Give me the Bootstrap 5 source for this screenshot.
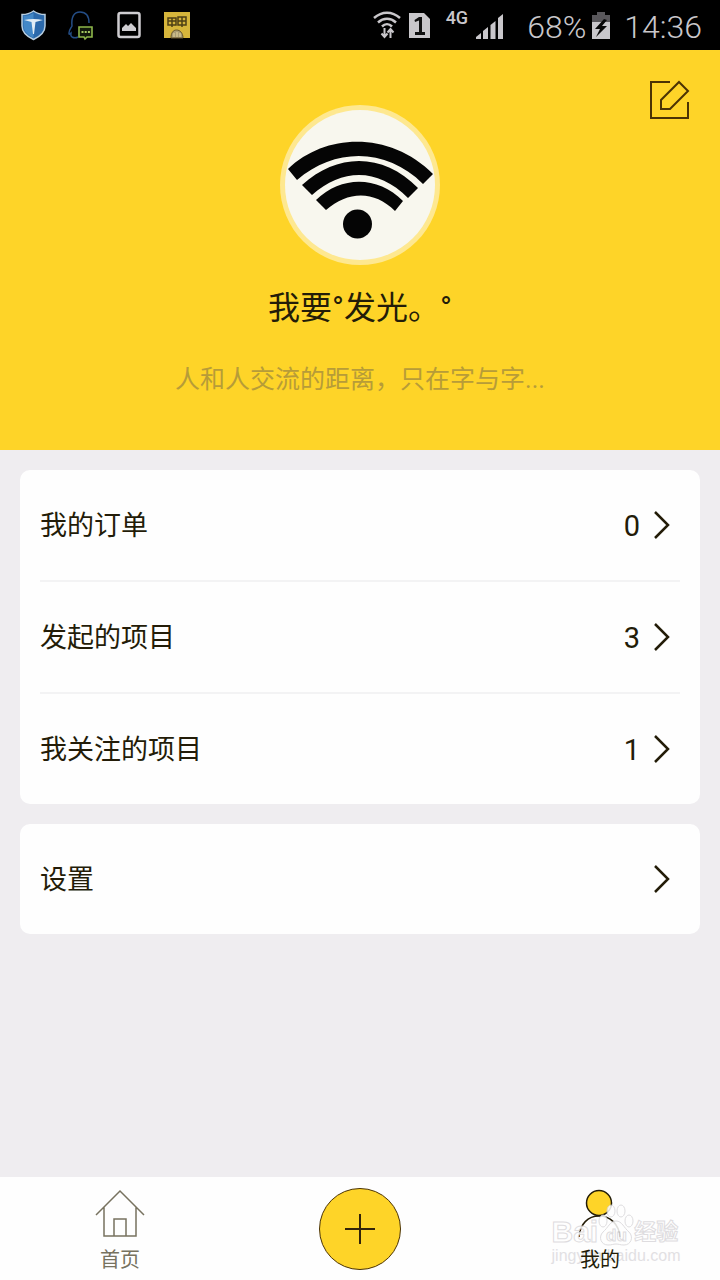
<!DOCTYPE html>
<html lang="zh-CN">
<head>
<meta charset="utf-8">
<meta name="viewport" content="width=device-width, initial-scale=1">
<title>我的</title>
<link href="https://cdn.jsdelivr.net/npm/bootstrap@5.3.0/dist/css/bootstrap.min.css" rel="stylesheet">
<style>
  body { background: #efedf0; color: #231c08; font-family: Roboto, "Noto Sans CJK SC", sans-serif; }
  svg { display: block; flex: none; }
  .status-bar { background: #000; color: #c9c7cb; height: 50px; padding: 0 18px 0 20px; font-size: 32px; font-weight: 300; line-height: 50px; }
  .status-bar .status-text { padding-top: 3px; }
  .status-apps { gap: 20px; }
  .net-label { font-size: 18px; font-weight: 500; line-height: 20px; padding-top: 8px; }
  .battery { margin: 0 14px 0 6px; }
  .hero { background: #fed428; height: 400px; padding: 24px 24px 0; }
  .hero-top { display: grid; grid-template-columns: 1fr auto 1fr; }
  .avatar { width: 160px; margin-top: 31px; grid-column: 2; }
  .edit-btn { color: #4b3304; }
  .nickname { font-size: 32px; line-height: 48px; margin-top: 19px; }
  .motto { font-size: 25px; line-height: 36px; margin-top: 30px; color: #b79c38; }
  .panels { padding: 20px; gap: 20px; }
  .panel { --bs-list-group-bg: #fefefe; border-radius: 10px; background: #fefefe; padding: 0 20px; }
  .panel-row { height: 110px; padding: 2px 10px 0 0; color: #231c08; font-size: 27px; line-height: 40px; background: transparent; border: 0; }
  .panel-row + .panel-row { height: 112px; border-top: 2px solid #f3f3f4; }
  .panel-row svg { margin-bottom: 2px; }
  .row-count { font-size: 29px; margin-right: 14px; }
  .tabs { background: #fefefe; height: 103px; }
  .tab-link { font-size: 20px; line-height: 30px; color: #77725f; padding-top: 7px; gap: 6px; }
  .tab-link.active { color: #231c08; }
  .tab-label { position: relative; z-index: 2; }
  .add-btn { width: 82px; height: 82px; background: #fed428; border: 1px solid #4b3304; color: #33240a; }
  .watermark { inset: 34px 0 auto; padding-left: 32px; color: #fff; -webkit-text-stroke: 1px #d9d7da; pointer-events: none; font-weight: 700; opacity: .85; z-index: 1; }
  .wm-logo { height: 32px; font-size: 30px; line-height: 32px; font-family: "Liberation Sans", "Noto Sans CJK SC", sans-serif; }
  .wm-logo svg { margin-bottom: 14px; }
  .wm-cn { font-size: 22px; }
  .wm-url { font-size: 16px; line-height: 16px; font-weight: 400; color: #dddbde; -webkit-text-stroke: 0; font-family: "Liberation Sans", sans-serif; }
</style>
</head>
<body class="d-flex flex-column min-vh-100">

<header class="status-bar d-flex justify-content-between">
  <div class="status-apps d-flex align-items-center">
    <svg width="27" height="32" viewBox="0 0 27 32"><path d="M13.500 2C10 4.500 6 5.500 2 5.500V17c0 6 5 10.500 11.500 13.500C20 27.500 25 23 25 17V5.500C21 5.500 17 4.500 13.500 2Z" fill="#2b69ab" stroke="#b8cee0" stroke-width="1.500"/><path d="M13.500 4v25C8 26 3.500 22 3.500 17V7c4 0 7-1 10-3Z" fill="#4388c7"/><path d="M4 11c6-1.500 13-1.500 19 0l-7.500 2L14 25h-1l-1.500-12Z" fill="#e2edf5"/></svg>
    <svg width="28" height="32" viewBox="0 0 28 32" fill="none"><path d="M5 28c-2-1-1-3-1-4-1 1-2 2-2 0 0-3 2-5 3-7C4 8 7 3 13 3s9 4 9 11" stroke="#244d86" stroke-width="1.500"/><path d="M5 28c2 1 4 1 6 0" stroke="#244d86" stroke-width="1.500"/><path d="M12 18h13v10h-5l-2 2-1-2h-5Z" fill="#11180b" stroke="#8fb84b" stroke-width="1.600"/><path d="M14.500 22h2v2h-2zm3.200 0h2v2h-2zm3.200 0h2v2h-2z" fill="#a5cb62"/></svg>
    <svg width="28" height="32" viewBox="0 0 28 32"><rect x="3.500" y="4" width="21" height="24" rx="2" fill="none" stroke="#cfcdd1" stroke-width="2.500"/><path d="M7 22v-3l4-4 2 2 3-3 5 5v3Z" fill="#cfcdd1"/></svg>
    <svg width="28" height="32" viewBox="0 0 28 32"><rect x="1" y="3" width="26" height="26" fill="#d6b53b"/><path d="M5 9h8v7H5zM9 9v9M5 12h8M15 8h8v8h-8zM19 8v10M15 12h8" fill="none" stroke="#4d3f16" stroke-width="1.500"/><path d="M8 29c0-5 2-8 5.500-8s6.500 3 6.500 8Z" fill="#a99c74" stroke="#66552a"/><path d="M11 28v-4m3 4v-5m3 5v-4" stroke="#e6d69a"/></svg>
  </div>
  <div class="d-flex align-items-center">
    <svg width="28" height="32" viewBox="0 0 28 32" fill="none" stroke="#c9c7cb" stroke-width="2.500"><path d="M1 9c8-7 18-7 26 0M5 13.500c5.500-5 12.500-5 18 0M9 17.500c3-3 7-3 10 0"/><path d="M11.500 19v9m-3-3.500 3 3.500 3-3.500M17.500 29v-9m-3 3.500 3-3.500 3 3.500" stroke-width="2"/></svg>
    <svg class="ms-2" width="21" height="32" viewBox="0 0 21 32"><path d="M0 4h15l6 6v19H0Z" fill="#c9c7cb"/><path d="M5.500 11 10 8h3v15h3v3H6v-3h4V11.500L6 13Z" fill="#111"/></svg>
    <span class="net-label align-self-start ms-3">4G</span>
    <svg class="ms-2" width="27" height="32" viewBox="0 0 27 32" fill="#c9c7cb"><path d="M0 30v-2l5-4v6zM7 30v-8l5-4v12zM14.500 30V16l5-4v18zM22 30V9l5-4v25z"/></svg>
    <span class="status-text ms-4">68%</span>
    <svg class="battery" width="18" height="32" viewBox="0 0 18 32"><path d="M0 6h5V3h8v3h5v8H0Z" fill="#59575b"/><path d="M0 13h18v17H0Z" fill="#c9c7cb"/><path d="m12 10-9 10h5l-4 8L15 17h-5l5-6Z" fill="#080808"/></svg>
    <span class="status-text">14:36</span>
  </div>
</header>

<section class="hero text-center">
  <div class="hero-top">
    <svg class="avatar" height="160" viewBox="0 0 160 160" role="img" aria-label="头像">
      <circle cx="80" cy="80" r="80" fill="#fee890"/><circle cx="80" cy="80" r="75" fill="#f8f7ee"/>
      <g fill="#050505"><path d="M8 64C47 27 111 27 153 69L143 79C107 43 56 42 17 75Z"/><path d="M22 80C58 47 104 48 138 83L128 93C98 63 63 63 32 90Z"/><path d="M36 95C62 70 98 71 123 96L115 106C94 85 68 86 46 105Z"/><circle cx="77.500" cy="119" r="14.500"/></g>
    </svg>
    <button type="button" class="btn edit-btn p-1 border-0 align-self-start ms-auto" aria-label="编辑资料">
      <svg width="44" height="44" viewBox="0 0 44 44" fill="none" stroke="currentColor" stroke-width="2"><path d="M22 4H3v36h37V24"/><path d="m31 4 9 9-18 18h-9v-9Z"/></svg>
    </button>
  </div>
  <h1 class="nickname fw-normal mb-0">我要°发光。°</h1>
  <p class="motto mb-0 text-truncate">人和人交流的距离，只在字与字...</p>
</section>

<main class="panels d-flex flex-column flex-grow-1">
  <div class="panel list-group">
    <a href="#orders" class="panel-row list-group-item list-group-item-action d-flex align-items-center">
      <span>我的订单</span><span class="row-count ms-auto">0</span>
      <svg width="16" height="28" viewBox="0 0 16 28" fill="none" stroke="currentColor" stroke-width="2.500"><path d="m1 1 13 13L1 27"/></svg>
    </a>
    <a href="#projects" class="panel-row list-group-item list-group-item-action d-flex align-items-center">
      <span>发起的项目</span><span class="row-count ms-auto">3</span>
      <svg width="16" height="28" viewBox="0 0 16 28" fill="none" stroke="currentColor" stroke-width="2.500"><path d="m1 1 13 13L1 27"/></svg>
    </a>
    <a href="#following" class="panel-row list-group-item list-group-item-action d-flex align-items-center">
      <span>我关注的项目</span><span class="row-count ms-auto">1</span>
      <svg width="16" height="28" viewBox="0 0 16 28" fill="none" stroke="currentColor" stroke-width="2.500"><path d="m1 1 13 13L1 27"/></svg>
    </a>
  </div>
  <div class="panel list-group">
    <a href="#settings" class="panel-row list-group-item list-group-item-action d-flex align-items-center">
      <span>设置</span>
      <svg class="ms-auto" width="16" height="28" viewBox="0 0 16 28" fill="none" stroke="currentColor" stroke-width="2.500"><path d="m1 1 13 13L1 27"/></svg>
    </a>
  </div>
</main>

<nav class="tabs row g-0 align-items-center text-center" aria-label="主导航">
  <div class="col-4">
    <a href="#home" class="tab-link text-decoration-none d-flex flex-column align-items-center">
      <svg width="50" height="50" viewBox="0 0 50 50" fill="none" stroke="currentColor" stroke-width="1.500"><path d="M1 26 25 2l24 24M9 18v29h32V18M19 47V30h12v17"/></svg>
      <span class="tab-label">首页</span>
    </a>
  </div>
  <div class="col-4">
    <button type="button" class="btn add-btn rounded-circle p-0 d-inline-flex align-items-center justify-content-center" aria-label="新建">
      <svg width="32" height="32" viewBox="0 0 32 32" stroke="currentColor" stroke-width="2"><path d="M16 1v30M1 16h30"/></svg>
    </button>
  </div>
  <div class="col-4 position-relative">
    <a href="#me" class="tab-link active text-decoration-none d-flex flex-column align-items-center" aria-current="page">
      <svg width="50" height="50" viewBox="0 0 50 50" fill="none" stroke="currentColor" stroke-width="1.500"><circle cx="24" cy="14" r="12.500" fill="#fed428"/><path d="M4 48C5 35 13 27 24 27s20 8 21 21"/></svg>
      <span class="tab-label">我的</span>
    </a>
    <div class="watermark position-absolute d-flex justify-content-center text-start" aria-hidden="true">
      <div>
        <div class="wm-logo d-flex align-items-center"><span>Bai</span>
          <svg width="36" height="44" viewBox="0 0 36 44" fill="#fff" stroke="#d9d7da"><ellipse cx="5" cy="18" rx="4" ry="6"/><ellipse cx="13" cy="8" rx="4" ry="6"/><ellipse cx="23" cy="8" rx="4" ry="6"/><ellipse cx="31" cy="18" rx="4" ry="6"/><path d="M18 18c6 0 8 7 13 11 5 5 2 13-5 13-4 0-5-1-8-1s-4 1-8 1c-7 0-10-8-5-13 5-4 7-11 13-11Z"/><text x="8" y="38" font-size="17">du</text></svg>
          <span class="wm-cn">经验</span></div>
        <div class="wm-url">jingyan.baidu.com</div>
      </div>
    </div>
  </div>
</nav>
<script src="https://cdn.jsdelivr.net/npm/bootstrap@5.3.0/dist/js/bootstrap.bundle.min.js"></script>
</body>
</html>
